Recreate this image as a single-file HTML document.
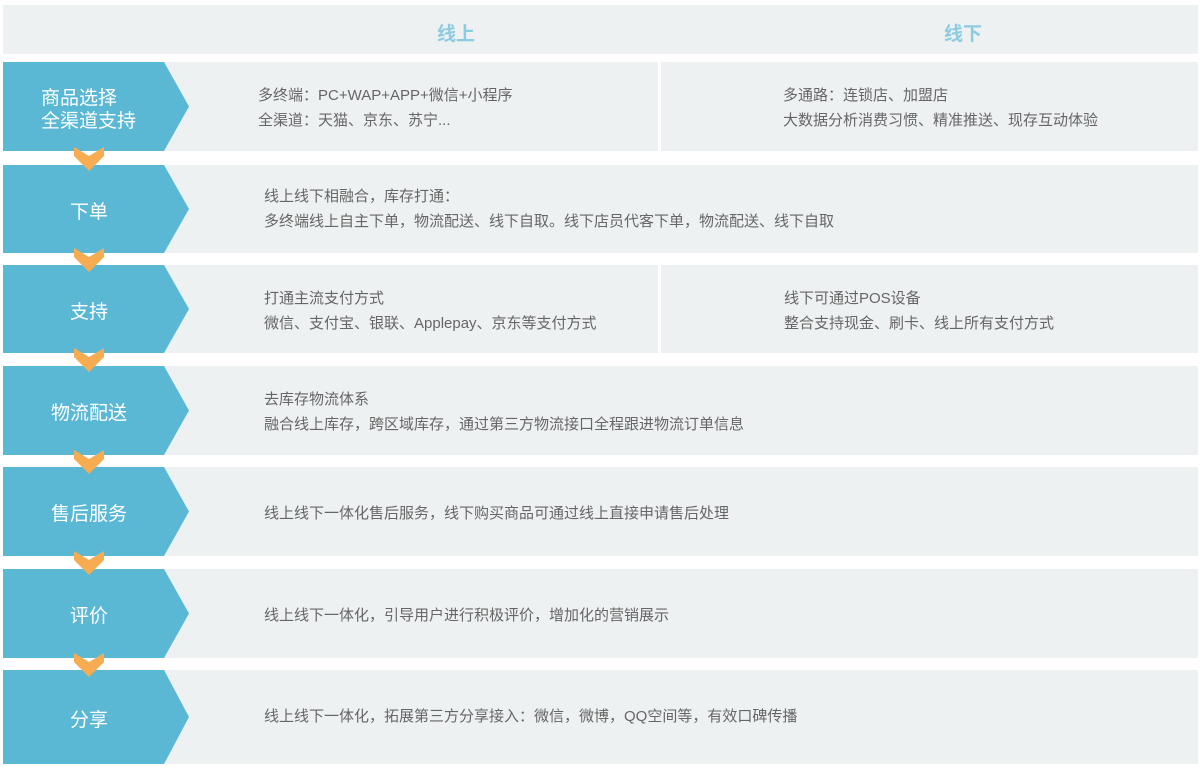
<!DOCTYPE html><html><head><meta charset="utf-8"><style>
body{margin:0;width:1201px;height:748px;overflow:hidden;background:#fff;font-family:"Liberation Sans","Noto Sans CJK SC",sans-serif;position:relative}
.a{position:absolute}
.hd{left:3px;top:5px;width:1195px;height:49px;background:#edf1f2}
.hd span{position:absolute;top:14px;font-size:19px;font-weight:bold;color:#8dcbe0}
.row{left:3px;width:1195px;background:#edf1f2}
.blue{position:absolute;left:0;top:0;width:186px;height:100%;background:#5bb8d5}
.lab{position:absolute;left:0;width:172px;top:3px;height:100%;display:flex;align-items:center;justify-content:center;color:#fff;font-size:19px;line-height:23px;text-align:left}
.t{position:absolute;font-size:15px;color:#666;line-height:25px;white-space:nowrap}
.div{position:absolute;left:655px;top:0;width:3px;height:100%;background:#fff}
.chev{position:absolute;left:74px;width:30px;height:24px;z-index:3}
</style></head><body>
<div class="a hd"><span style="left:434px">线上</span><span style="left:941px">线下</span></div>

<div class="a row" style="top:62px;height:89px"><div class="blue" style="clip-path:polygon(0 0,161px 0,186px 50%,161px 100%,0 100%)"></div><div class="lab" style="justify-content:flex-start;padding-left:38px;width:140px">商品选择<br>全渠道支持</div><div class="div"></div>
<div class="t" style="left:255px;top:21px">多终端：PC+WAP+APP+微信+小程序<br>全渠道：天猫、京东、苏宁...</div>
<div class="t" style="left:780px;top:21px">多通路：连锁店、加盟店<br>大数据分析消费习惯、精准推送、现存互动体验</div></div>

<div class="a row" style="top:165px;height:88px"><div class="blue" style="clip-path:polygon(0 0,161px 0,186px 50%,161px 100%,0 100%)"></div><div class="lab">下单</div>
<div class="t" style="left:261px;top:19px">线上线下相融合，库存打通：<br>多终端线上自主下单，物流配送、线下自取。线下店员代客下单，物流配送、线下自取</div></div>

<div class="a row" style="top:265px;height:88px"><div class="blue" style="clip-path:polygon(0 0,161px 0,186px 50%,161px 100%,0 100%)"></div><div class="lab">支持</div><div class="div"></div>
<div class="t" style="left:261px;top:21px">打通主流支付方式<br>微信、支付宝、银联、Applepay、京东等支付方式</div>
<div class="t" style="left:781px;top:21px">线下可通过POS设备<br>整合支持现金、刷卡、线上所有支付方式</div></div>

<div class="a row" style="top:366px;height:89px"><div class="blue" style="clip-path:polygon(0 0,161px 0,186px 50%,161px 100%,0 100%)"></div><div class="lab">物流配送</div>
<div class="t" style="left:261px;top:21px">去库存物流体系<br>融合线上库存，跨区域库存，通过第三方物流接口全程跟进物流订单信息</div></div>

<div class="a row" style="top:467px;height:89px"><div class="blue" style="clip-path:polygon(0 0,161px 0,186px 50%,161px 100%,0 100%)"></div><div class="lab">售后服务</div>
<div class="t" style="left:261px;top:34px">线上线下一体化售后服务，线下购买商品可通过线上直接申请售后处理</div></div>

<div class="a row" style="top:569px;height:89px"><div class="blue" style="clip-path:polygon(0 0,161px 0,186px 50%,161px 100%,0 100%)"></div><div class="lab">评价</div>
<div class="t" style="left:261px;top:34px">线上线下一体化，引导用户进行积极评价，增加化的营销展示</div></div>

<div class="a row" style="top:670px;height:94px"><div class="blue" style="clip-path:polygon(0 0,161px 0,186px 50%,161px 100%,0 100%)"></div><div class="lab" style="height:94px">分享</div>
<div class="t" style="left:261px;top:34px">线上线下一体化，拓展第三方分享接入：微信，微博，QQ空间等，有效口碑传播</div></div>

<svg class="chev" style="top:147px" viewBox="0 0 30 24"><polygon points="0,0 15,9 30,0 30,9 15,24 0,9" fill="#f8ac52"/></svg>
<svg class="chev" style="top:248px" viewBox="0 0 30 24"><polygon points="0,0 15,9 30,0 30,9 15,24 0,9" fill="#f8ac52"/></svg>
<svg class="chev" style="top:348px" viewBox="0 0 30 24"><polygon points="0,0 15,9 30,0 30,9 15,24 0,9" fill="#f8ac52"/></svg>
<svg class="chev" style="top:450px" viewBox="0 0 30 24"><polygon points="0,0 15,9 30,0 30,9 15,24 0,9" fill="#f8ac52"/></svg>
<svg class="chev" style="top:551px" viewBox="0 0 30 24"><polygon points="0,0 15,9 30,0 30,9 15,24 0,9" fill="#f8ac52"/></svg>
<svg class="chev" style="top:653px" viewBox="0 0 30 24"><polygon points="0,0 15,9 30,0 30,9 15,24 0,9" fill="#f8ac52"/></svg>
</body></html>
